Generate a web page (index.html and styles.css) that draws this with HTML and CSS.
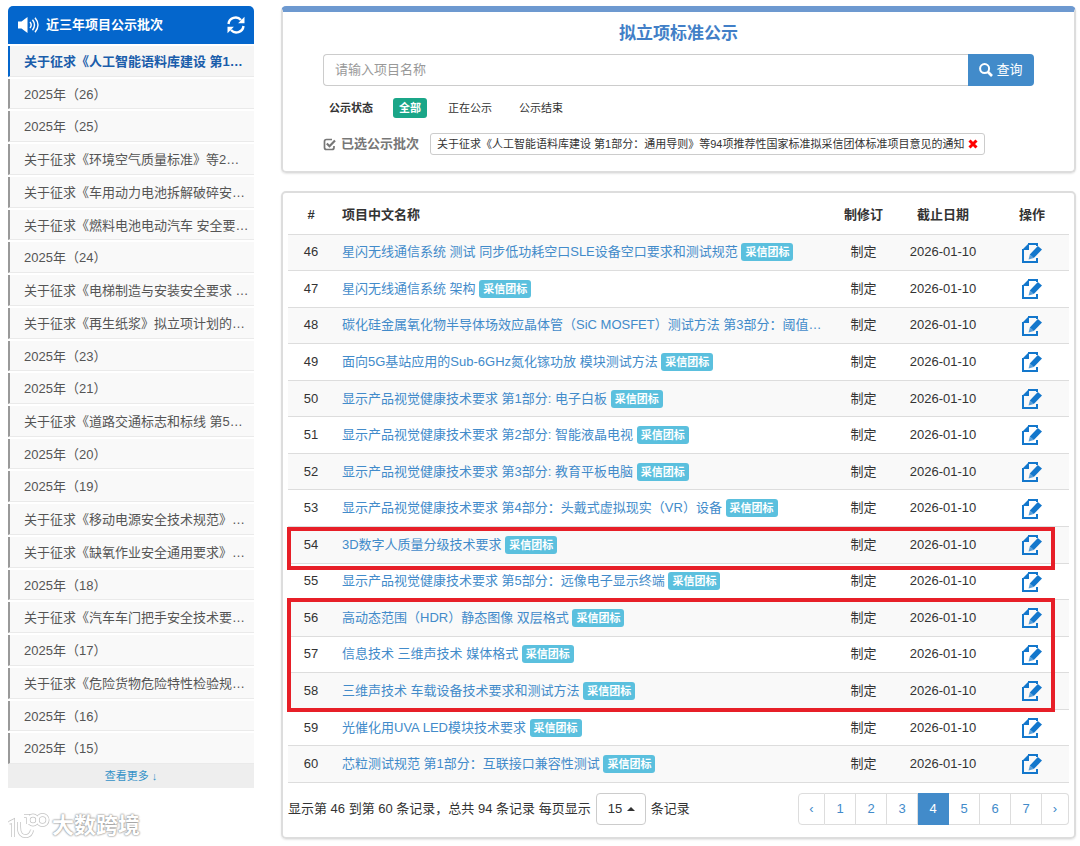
FILE: index.html
```html
<!DOCTYPE html>
<html lang="zh-CN">
<head>
    <meta charset="utf-8">
    <title>拟立项标准公示</title>
    <link rel="stylesheet" href="styles.css">
</head>
<body>
<svg class="sprite" aria-hidden="true">
    <symbol id="i-edit" viewBox="0 0 20 20">
        <path d="M6 1H15V3M1 6V19H15V15" fill="none" stroke="currentColor" stroke-width="2"/>
        <path d="M7 0V7H0z" fill="currentColor"/>
        <path d="M15.800 3L20 6.600 11.800 15 7.800 11.600z" fill="currentColor"/>
        <path d="M7.800 11.600l4 3.400-5.200 1.600z" fill="currentColor" opacity=".7"/>
    </symbol>
</svg>
<div class="layout">
    <aside class="sidebar">
        <div class="side-head">
            <svg class="icon-sound" viewBox="0 0 21 18" aria-hidden="true">
                <path d="M0 5.500h3.500l6-4.500v16l-6-4.500H0z" fill="#fff"/>
                <path d="M12 6q2.400 3 0 6M14.500 3.800q4 5.200 0 10.400M17 1.800q6 7.200 0 14.400" fill="none" stroke="#fff" stroke-width="1.400"/>
            </svg>
            <h2>近三年项目公示批次</h2>
            <button type="button" class="refresh" aria-label="刷新">
                <svg viewBox="0 0 18 18" aria-hidden="true">
                    <path d="M1.500 8A7.200 7.200 0 0 1 14 4M16.500 10A7.200 7.200 0 0 1 4 14" fill="none" stroke="#fff" stroke-width="2.400"/>
                    <path d="M17.500 .8v6.400h-6.400zM.5 17.200v-6.400h6.400z" fill="#fff"/>
                </svg>
            </button>
        </div>
        <ul class="batch">
            <li class="active"><a href="#">关于征求《人工智能语料库建设 第1…</a></li>
            <li><a href="#">2025年（26）</a></li>
            <li><a href="#">2025年（25）</a></li>
            <li><a href="#">关于征求《环境空气质量标准》等2…</a></li>
            <li><a href="#">关于征求《车用动力电池拆解破碎安…</a></li>
            <li><a href="#">关于征求《燃料电池电动汽车 安全要…</a></li>
            <li><a href="#">2025年（24）</a></li>
            <li><a href="#">关于征求《电梯制造与安装安全要求 …</a></li>
            <li><a href="#">关于征求《再生纸浆》拟立项计划的…</a></li>
            <li><a href="#">2025年（23）</a></li>
            <li><a href="#">2025年（21）</a></li>
            <li><a href="#">关于征求《道路交通标志和标线 第5…</a></li>
            <li><a href="#">2025年（20）</a></li>
            <li><a href="#">2025年（19）</a></li>
            <li><a href="#">关于征求《移动电源安全技术规范》…</a></li>
            <li><a href="#">关于征求《缺氧作业安全通用要求》…</a></li>
            <li><a href="#">2025年（18）</a></li>
            <li><a href="#">关于征求《汽车车门把手安全技术要…</a></li>
            <li><a href="#">2025年（17）</a></li>
            <li><a href="#">关于征求《危险货物危险特性检验规…</a></li>
            <li><a href="#">2025年（16）</a></li>
            <li><a href="#">2025年（15）</a></li>
        </ul>
        <a href="#" class="more">查看更多 ↓</a>
        <div class="brand">
            <svg viewBox="0 0 42 30" aria-hidden="true">
                <g class="brand-edge">
                    <path d="M1 12l4-2v16M11 11v5q0 10 8 9 4-1 5-6M16 5h4v8"/>
                    <circle cx="25" cy="9" r="4.500"/>
                    <circle cx="34.500" cy="9" r="5"/>
                </g>
                <g class="brand-line">
                    <path d="M1 12l4-2v16M11 11v5q0 10 8 9 4-1 5-6M16 5h4v8"/>
                    <circle cx="25" cy="9" r="4.500"/>
                    <circle cx="34.500" cy="9" r="5"/>
                </g>
            </svg>
            <span>大数跨境</span>
        </div>
    </aside>

    <main class="content">
        <section class="card search">
            <h1>拟立项标准公示</h1>
            <form class="search-form">
                <input type="text" placeholder="请输入项目名称" aria-label="项目名称">
                <button type="submit">
                    <svg viewBox="0 0 14 14" aria-hidden="true">
                        <circle cx="5.600" cy="5.600" r="4.500" fill="none" stroke="#fff" stroke-width="2"/>
                        <path d="M9 9l4 4" stroke="#fff" stroke-width="2.600"/>
                    </svg>
                    查询
                </button>
            </form>
            <div class="status">
                <b>公示状态</b>
                <a href="#" class="on">全部</a>
                <a href="#">正在公示</a>
                <a href="#">公示结束</a>
            </div>
            <div class="selected">
                <svg class="icon-check" viewBox="0 0 13 13" aria-hidden="true">
                    <path d="M9 1.500H3.500q-2 0-2 2v6q0 2 2 2h5.500q2 0 2-2V8" fill="none" stroke="#777" stroke-width="1.700"/>
                    <path d="M3.800 5.500l2.700 2.700 5.500-5.700" fill="none" stroke="#777" stroke-width="2.200"/>
                </svg>
                <span class="selected-label">已选公示批次</span>
                <span class="tag">关于征求《人工智能语料库建设 第1部分：通用导则》等94项推荐性国家标准拟采信团体标准项目意见的通知
                    <button type="button" aria-label="移除">
                        <svg viewBox="0 0 10 10" aria-hidden="true"><path d="M1.500 1.500l7 7M8.500 1.500l-7 7" stroke="#f00" stroke-width="3"/></svg>
                    </button>
                </span>
            </div>
        </section>

        <section class="card list">
            <table>
                <thead>
                <tr>
                    <th class="num">#</th>
                    <th class="name">项目中文名称</th>
                    <th class="type">制修订</th>
                    <th class="date">截止日期</th>
                    <th class="op">操作</th>
                </tr>
                </thead>
                <tbody>
                <tr>
                    <td>46</td>
                    <td class="name"><a href="#">星闪无线通信系统 测试 同步低功耗空口SLE设备空口要求和测试规范</a> <span class="label">采信团标</span></td>
                    <td>制定</td>
                    <td>2026-01-10</td>
                    <td><a href="#" class="edit" aria-label="编辑"><svg><use href="#i-edit"/></svg></a></td>
                </tr>
                <tr>
                    <td>47</td>
                    <td class="name"><a href="#">星闪无线通信系统 架构</a> <span class="label">采信团标</span></td>
                    <td>制定</td>
                    <td>2026-01-10</td>
                    <td><a href="#" class="edit" aria-label="编辑"><svg><use href="#i-edit"/></svg></a></td>
                </tr>
                <tr>
                    <td>48</td>
                    <td class="name"><a href="#">碳化硅金属氧化物半导体场效应晶体管（SiC MOSFET）测试方法 第3部分：阈值…</a></td>
                    <td>制定</td>
                    <td>2026-01-10</td>
                    <td><a href="#" class="edit" aria-label="编辑"><svg><use href="#i-edit"/></svg></a></td>
                </tr>
                <tr>
                    <td>49</td>
                    <td class="name"><a href="#">面向5G基站应用的Sub-6GHz氮化镓功放 模块测试方法</a> <span class="label">采信团标</span></td>
                    <td>制定</td>
                    <td>2026-01-10</td>
                    <td><a href="#" class="edit" aria-label="编辑"><svg><use href="#i-edit"/></svg></a></td>
                </tr>
                <tr>
                    <td>50</td>
                    <td class="name"><a href="#">显示产品视觉健康技术要求 第1部分: 电子白板</a> <span class="label">采信团标</span></td>
                    <td>制定</td>
                    <td>2026-01-10</td>
                    <td><a href="#" class="edit" aria-label="编辑"><svg><use href="#i-edit"/></svg></a></td>
                </tr>
                <tr>
                    <td>51</td>
                    <td class="name"><a href="#">显示产品视觉健康技术要求 第2部分: 智能液晶电视</a> <span class="label">采信团标</span></td>
                    <td>制定</td>
                    <td>2026-01-10</td>
                    <td><a href="#" class="edit" aria-label="编辑"><svg><use href="#i-edit"/></svg></a></td>
                </tr>
                <tr>
                    <td>52</td>
                    <td class="name"><a href="#">显示产品视觉健康技术要求 第3部分: 教育平板电脑</a> <span class="label">采信团标</span></td>
                    <td>制定</td>
                    <td>2026-01-10</td>
                    <td><a href="#" class="edit" aria-label="编辑"><svg><use href="#i-edit"/></svg></a></td>
                </tr>
                <tr>
                    <td>53</td>
                    <td class="name"><a href="#">显示产品视觉健康技术要求 第4部分：头戴式虚拟现实（VR）设备</a> <span class="label">采信团标</span></td>
                    <td>制定</td>
                    <td>2026-01-10</td>
                    <td><a href="#" class="edit" aria-label="编辑"><svg><use href="#i-edit"/></svg></a></td>
                </tr>
                <tr class="marked">
                    <td>54<i class="mark"></i></td>
                    <td class="name"><a href="#">3D数字人质量分级技术要求</a> <span class="label">采信团标</span></td>
                    <td>制定</td>
                    <td>2026-01-10</td>
                    <td><a href="#" class="edit" aria-label="编辑"><svg><use href="#i-edit"/></svg></a></td>
                </tr>
                <tr>
                    <td>55</td>
                    <td class="name"><a href="#">显示产品视觉健康技术要求 第5部分：远像电子显示终端</a> <span class="label">采信团标</span></td>
                    <td>制定</td>
                    <td>2026-01-10</td>
                    <td><a href="#" class="edit" aria-label="编辑"><svg><use href="#i-edit"/></svg></a></td>
                </tr>
                <tr class="marked">
                    <td>56<i class="mark mark-3"></i></td>
                    <td class="name"><a href="#">高动态范围（HDR）静态图像 双层格式</a> <span class="label">采信团标</span></td>
                    <td>制定</td>
                    <td>2026-01-10</td>
                    <td><a href="#" class="edit" aria-label="编辑"><svg><use href="#i-edit"/></svg></a></td>
                </tr>
                <tr>
                    <td>57</td>
                    <td class="name"><a href="#">信息技术 三维声技术 媒体格式</a> <span class="label">采信团标</span></td>
                    <td>制定</td>
                    <td>2026-01-10</td>
                    <td><a href="#" class="edit" aria-label="编辑"><svg><use href="#i-edit"/></svg></a></td>
                </tr>
                <tr>
                    <td>58</td>
                    <td class="name"><a href="#">三维声技术 车载设备技术要求和测试方法</a> <span class="label">采信团标</span></td>
                    <td>制定</td>
                    <td>2026-01-10</td>
                    <td><a href="#" class="edit" aria-label="编辑"><svg><use href="#i-edit"/></svg></a></td>
                </tr>
                <tr>
                    <td>59</td>
                    <td class="name"><a href="#">光催化用UVA LED模块技术要求</a> <span class="label">采信团标</span></td>
                    <td>制定</td>
                    <td>2026-01-10</td>
                    <td><a href="#" class="edit" aria-label="编辑"><svg><use href="#i-edit"/></svg></a></td>
                </tr>
                <tr>
                    <td>60</td>
                    <td class="name"><a href="#">芯粒测试规范 第1部分：互联接口兼容性测试</a> <span class="label">采信团标</span></td>
                    <td>制定</td>
                    <td>2026-01-10</td>
                    <td><a href="#" class="edit" aria-label="编辑"><svg><use href="#i-edit"/></svg></a></td>
                </tr>
                </tbody>
            </table>
            <div class="foot">
                <div class="info">
                    <label for="size">显示第 46 到第 60 条记录，总共 94 条记录 每页显示</label>
                    <span class="size">
                        <select id="size">
                            <option>15</option>
                        </select>
                        <i class="caret"></i>
                    </span>
                    条记录
                </div>
                <nav class="pages">
                    <a href="#">‹</a>
                    <a href="#">1</a>
                    <a href="#">2</a>
                    <a href="#">3</a>
                    <a href="#" class="current">4</a>
                    <a href="#">5</a>
                    <a href="#">6</a>
                    <a href="#">7</a>
                    <a href="#">›</a>
                </nav>
            </div>
        </section>
    </main>
</div>
</body>
</html>
```
FILE: styles.css
```css
* {
    box-sizing: border-box;
}

body {
    margin: 0;
    background: #fff;
    color: #333;
    font-family: "Liberation Sans", "Noto Sans CJK SC", sans-serif;
    font-size: 13px;
    line-height: 20px;
}

a {
    color: #428bca;
    text-decoration: none;
}

button {
    padding: 0;
    border: 0;
    background: none;
    font: inherit;
    cursor: pointer;
}

svg {
    display: block;
}

.sprite {
    position: absolute;
    width: 0;
    height: 0;
}

.layout {
    display: grid;
    grid-template-columns: 246px 1fr;
    gap: 27px;
    min-height: 100vh;
    padding: 6px 4px 7px 8px;
}

/* sidebar */
.sidebar {
    display: flex;
    flex-direction: column;
    min-width: 0;
}

.side-head {
    display: flex;
    align-items: center;
    height: 38px;
    padding: 0 9px 0 10px;
    border-radius: 5px 5px 0 0;
    background: #0466cc;
    color: #fff;
}

.side-head h2 {
    flex: 1;
    margin: 0 0 0 7px;
    font-size: 13px;
}

.icon-sound {
    width: 21px;
    height: 18px;
}

.refresh svg {
    width: 18px;
    height: 18px;
}

.batch {
    flex: 1;
    display: grid;
    grid-auto-rows: minmax(29px, 1fr);
    gap: 2px;
    margin: 2px 0 0;
    padding: 0;
    list-style: none;
}

.batch li {
    display: flex;
    min-width: 0;
}

.batch a {
    flex: 1;
    min-width: 0;
    padding: 6px 0 2px 14px;
    border-left: 2px solid #999;
    border-bottom: 1px solid #eaeaea;
    background: #f9f9f9;
    color: #555;
    overflow: hidden;
    text-overflow: ellipsis;
    white-space: nowrap;
}

.batch .active a {
    border-left-color: #0466cc;
    background: #f5f5f5;
    color: #1a5dab;
    font-weight: bold;
}

.more {
    height: 24px;
    background: #eee;
    color: #3492c8;
    font-size: 11px;
    line-height: 24px;
    text-align: center;
}

.brand {
    display: flex;
    align-items: center;
    gap: 2px;
    height: 51px;
    padding-top: 24px;
    color: #fff;
    font-size: 22px;
    font-weight: bold;
    text-shadow: 0 0 2px #888, 0 0 2px #999;
}

.brand svg {
    width: 42px;
    height: 30px;
    fill: none;
}

.brand-edge {
    stroke: #c4c4c4;
    stroke-width: 4;
}

.brand-line {
    stroke: #fff;
    stroke-width: 2.5;
}

/* cards */
.content {
    display: flex;
    flex-direction: column;
    gap: 18px;
    min-width: 0;
}

.card {
    border: 2px solid #ddd;
    border-radius: 5px;
    box-shadow: 0 1px 2px rgba(0, 0, 0, .1);
}

.search {
    padding: 11px 40px 16px;
    border-top: 6px solid #6d99d0;
}

.search h1 {
    margin: 0 0 9px;
    color: #427fc7;
    font-size: 17px;
    line-height: 22px;
    text-align: center;
}

.search-form {
    display: flex;
    height: 32px;
}

.search-form input {
    flex: 1;
    min-width: 0;
    padding: 0 11px;
    border: 1px solid #ccc;
    border-right: 0;
    border-radius: 4px 0 0 4px;
    font: inherit;
}

.search-form input::placeholder {
    color: #999;
}

.search-form button {
    display: flex;
    align-items: center;
    justify-content: center;
    gap: 3px;
    width: 66px;
    border-radius: 0 4px 4px 0;
    background: #428bca;
    color: #fff;
}

.search-form svg {
    width: 14px;
    height: 14px;
}

.status {
    display: flex;
    align-items: center;
    gap: 15px;
    margin-top: 12px;
    padding-left: 6px;
    font-size: 11px;
}

.status b {
    margin-right: 5px;
}

.status a {
    padding: 0 6px;
    border-radius: 3px;
    color: #333;
}

.status .on {
    background: #1aa688;
    color: #fff;
    font-weight: bold;
}

.selected {
    display: flex;
    align-items: center;
    margin-top: 15px;
}

.icon-check {
    width: 13px;
    height: 13px;
}

.selected-label {
    margin: 0 11px 0 5px;
    color: #777;
    font-weight: bold;
}

.tag {
    display: flex;
    align-items: center;
    gap: 4px;
    padding: 0 6px;
    border: 1px solid #ccc;
    border-radius: 3px;
    font-size: 11px;
    white-space: nowrap;
}

.tag svg {
    width: 10px;
    height: 10px;
}

/* table */
.list {
    flex: 1;
    display: flex;
    flex-direction: column;
    padding: 4px 5px 12px;
}

.list table {
    flex: 1;
    width: 100%;
    border-collapse: collapse;
    table-layout: fixed;
}

.list th,
.list td {
    height: 35px;
    padding: 0 8px;
    border-bottom: 1px solid #ddd;
    text-align: center;
}

.list th {
    height: 37px;
}

.list th.name,
.list td.name {
    text-align: left;
    overflow: hidden;
    text-overflow: ellipsis;
    white-space: nowrap;
}

.num {
    width: 46px;
}

.type {
    width: 55px;
}

.list .type {
    padding: 0;
}

.date {
    width: 104px;
}

.op {
    width: 74px;
}

.list tbody tr:nth-child(odd) {
    background: #f9f9f9;
}

.label {
    display: inline-block;
    padding: 0 4px;
    border-radius: 3px;
    background: #5bc0de;
    color: #fff;
    font-size: 11px;
    font-weight: bold;
    line-height: 18px;
}

.edit {
    display: inline-block;
    color: #1377cc;
    vertical-align: middle;
}

.edit svg {
    width: 20px;
    height: 20px;
}

.marked {
    position: relative;
}

/* red frame drawn over the rows */
.mark {
    position: absolute;
    top: 0;
    left: -1px;
    right: 14px;
    height: calc(100% + 7px);
    border: 4px solid #e71f28;
    pointer-events: none;
}

.mark-3 {
    top: -2px;
    height: calc(300% + 5px);
}

.foot {
    display: flex;
    align-items: center;
    justify-content: space-between;
    padding-top: 10px;
}

.info {
    display: flex;
    align-items: center;
    gap: 5px;
}

.size {
    position: relative;
}

.size select {
    width: 50px;
    height: 32px;
    padding: 0 11px;
    border: 1px solid #ccc;
    border-radius: 4px;
    background: #fff;
    color: #333;
    font: inherit;
    appearance: none;
}

.caret {
    position: absolute;
    top: 14px;
    right: 11px;
    border-bottom: 4px solid #333;
    border-left: 4px solid transparent;
    border-right: 4px solid transparent;
    pointer-events: none;
}

.pages {
    display: flex;
}

.pages a {
    min-width: 31px;
    padding: 5px 0;
    border: 1px solid #ddd;
    border-left: 0;
    text-align: center;
}

.pages a:first-child {
    min-width: 27px;
    border-left: 1px solid #ddd;
    border-radius: 4px 0 0 4px;
}

.pages a:last-child {
    min-width: 27px;
    border-radius: 0 4px 4px 0;
}

.pages .current {
    border-color: #428bca;
    background: #428bca;
    color: #fff;
}
```
